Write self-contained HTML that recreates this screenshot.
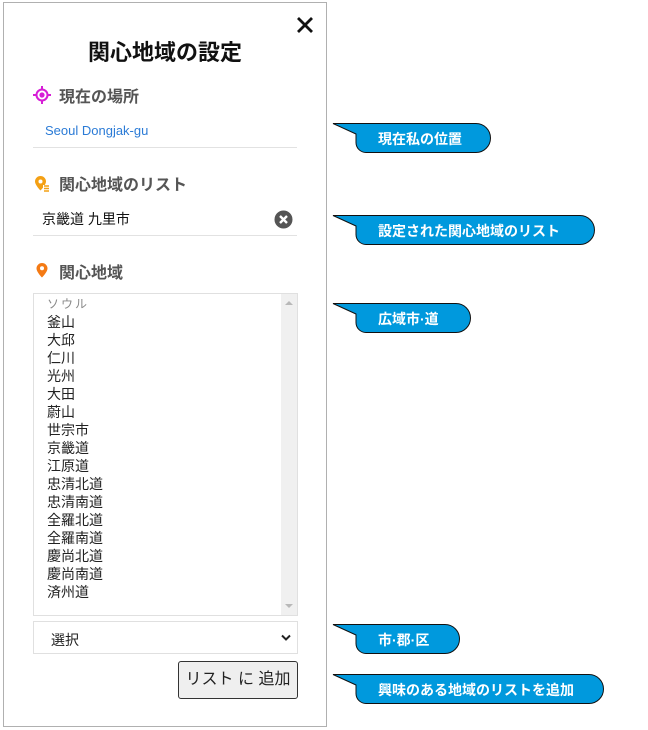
<!DOCTYPE html>
<html><head><meta charset="utf-8"><style>
*{margin:0;padding:0;box-sizing:border-box}
body{width:648px;height:730px;background:#fff;position:relative;font-family:"Liberation Sans","Noto Sans CJK JP",sans-serif;overflow:hidden}
.a{position:absolute}
.panel{left:3px;top:2px;width:324px;height:725px;border:1px solid #b0b0b0}
.title{left:3px;width:324px;top:35px;text-align:center;font-size:22px;font-weight:bold;color:#111}
.h{left:59px;font-size:16px;font-weight:bold;color:#555}
.line{left:33px;width:264px;height:1px;background:#e2e2e2}
.list{left:33px;top:293px;width:265px;height:323px;border:1px solid #e0e0e0}
.sb{position:absolute;right:0;top:0;width:16px;height:100%;background:#f0f0f0}
.items{position:absolute;left:13px;top:1px;font-size:14px;line-height:18px;color:#222}
.bl{font-family:"Liberation Sans","Noto Sans CJK JP",sans-serif;font-size:14px;font-weight:bold;color:#fff}
</style></head><body>
<div class="a panel"></div>
<svg class="a" style="left:296px;top:16px" width="18" height="18" viewBox="0 0 18 18"><path d="M2 2L16 16M16 2L2 16" stroke="#111" stroke-width="2.8"/></svg>
<div class="a title">関心地域の設定</div>

<svg class="a" style="left:33px;top:86px" width="18" height="18" viewBox="0 0 18 18"><circle cx="9" cy="9" r="5.5" fill="none" stroke="#d61ed6" stroke-width="2"/><circle cx="9" cy="9" r="2.6" fill="#d61ed6"/><path d="M9 0v3M9 15v3M0 9h3M15 9h3" stroke="#d61ed6" stroke-width="2"/></svg>
<div class="a h" style="top:83px">現在の場所</div>
<div class="a" style="left:45px;top:123px;font-size:13px;color:#2b7bd6">Seoul Dongjak-gu</div>
<div class="a line" style="top:147px"></div>

<svg class="a" style="left:34px;top:175px" width="16" height="18" viewBox="0 0 16 18"><path d="M6.5 1a5.5 5.5 0 0 1 5.5 5.5c0 3.5-5.5 9-5.5 9S1 10 1 6.5A5.5 5.5 0 0 1 6.5 1z" fill="#f4a014"/><circle cx="6.5" cy="6.5" r="2" fill="#fff"/><rect x="9" y="10" width="6" height="6" fill="#fff"/><path d="M10 11h5M10 13.5h5M10 16h5" stroke="#f4a014" stroke-width="1.4"/></svg>
<div class="a h" style="top:171px">関心地域のリスト</div>
<div class="a" style="left:42px;top:209px;font-size:14px;color:#111">京畿道 九里市</div>
<svg class="a" style="left:274px;top:210px" width="19" height="19" viewBox="0 0 19 19"><circle cx="9.5" cy="9.5" r="9" fill="#555"/><path d="M6 6l7 7M13 6l-7 7" stroke="#fff" stroke-width="2.4"/></svg>
<div class="a line" style="top:235px"></div>

<svg class="a" style="left:35px;top:262px" width="14" height="17" viewBox="0 0 14 17"><path d="M7 1a5.5 5.5 0 0 1 5.5 5.5C12.5 10 7 15.5 7 15.5S1.5 10 1.5 6.5A5.5 5.5 0 0 1 7 1z" fill="#f47a14"/><circle cx="7" cy="6.3" r="2" fill="#fff"/></svg>
<div class="a h" style="top:259px">関心地域</div>

<div class="a list"><div class="sb"><svg style="position:absolute;left:4px;top:6px" width="8" height="6"><path d="M0 5L4 1L8 5Z" fill="#b8b8b8"/></svg><svg style="position:absolute;left:4px;bottom:6px" width="8" height="6"><path d="M0 1L4 5L8 1Z" fill="#b8b8b8"/></svg></div>
<div class="items"><div style="color:#888;font-size:12px;letter-spacing:2px">ソウル</div>釜山<br>大邱<br>仁川<br>光州<br>大田<br>蔚山<br>世宗市<br>京畿道<br>江原道<br>忠清北道<br>忠清南道<br>全羅北道<br>全羅南道<br>慶尚北道<br>慶尚南道<br>済州道</div></div>

<div class="a" style="left:33px;top:621px;width:265px;height:33px;border:1px solid #e0e0e0;font-size:14px;color:#222;padding:8px 0 0 17px">選択
<svg style="position:absolute;right:6px;top:12px" width="10" height="8"><path d="M1 1.5L5 5.5L9 1.5" stroke="#222" stroke-width="2" fill="none"/></svg></div>
<div class="a" style="left:178px;top:661px;width:120px;height:38px;border:1px solid #333;border-radius:3px;background:#efefef;font-size:16px;color:#222;text-align:center;line-height:36px">リスト に 追加</div>

<svg class="a" style="left:0;top:0" width="648" height="730">
<g fill="#0099dd" stroke="#111" stroke-width="1">
<path d="M333 123.5H476A14.5 14.5 0 0 1 476 152.5H366A10 10 0 0 1 356 142.5V134Z"/>
<path d="M333 215.5H580A14.5 14.5 0 0 1 580 244.5H366A10 10 0 0 1 356 234.5V226Z"/>
<path d="M333 303.5H456A14.5 14.5 0 0 1 456 332.5H366A10 10 0 0 1 356 322.5V314Z"/>
<path d="M333 624.5H445A14.5 14.5 0 0 1 445 653.5H366A10 10 0 0 1 356 643.5V635Z"/>
<path d="M333 674.5H589A14.5 14.5 0 0 1 589 703.5H366A10 10 0 0 1 356 693.5V685Z"/>
</g></svg>
<div class="a bl" style="left:378px;top:129px">現在私の位置</div>
<div class="a bl" style="left:378px;top:221px">設定された関心地域のリスト</div>
<div class="a bl" style="left:378px;top:309px">広域市·道</div>
<div class="a bl" style="left:378px;top:630px">市·郡·区</div>
<div class="a bl" style="left:378px;top:680px">興味のある地域のリストを追加</div>
</body></html>
